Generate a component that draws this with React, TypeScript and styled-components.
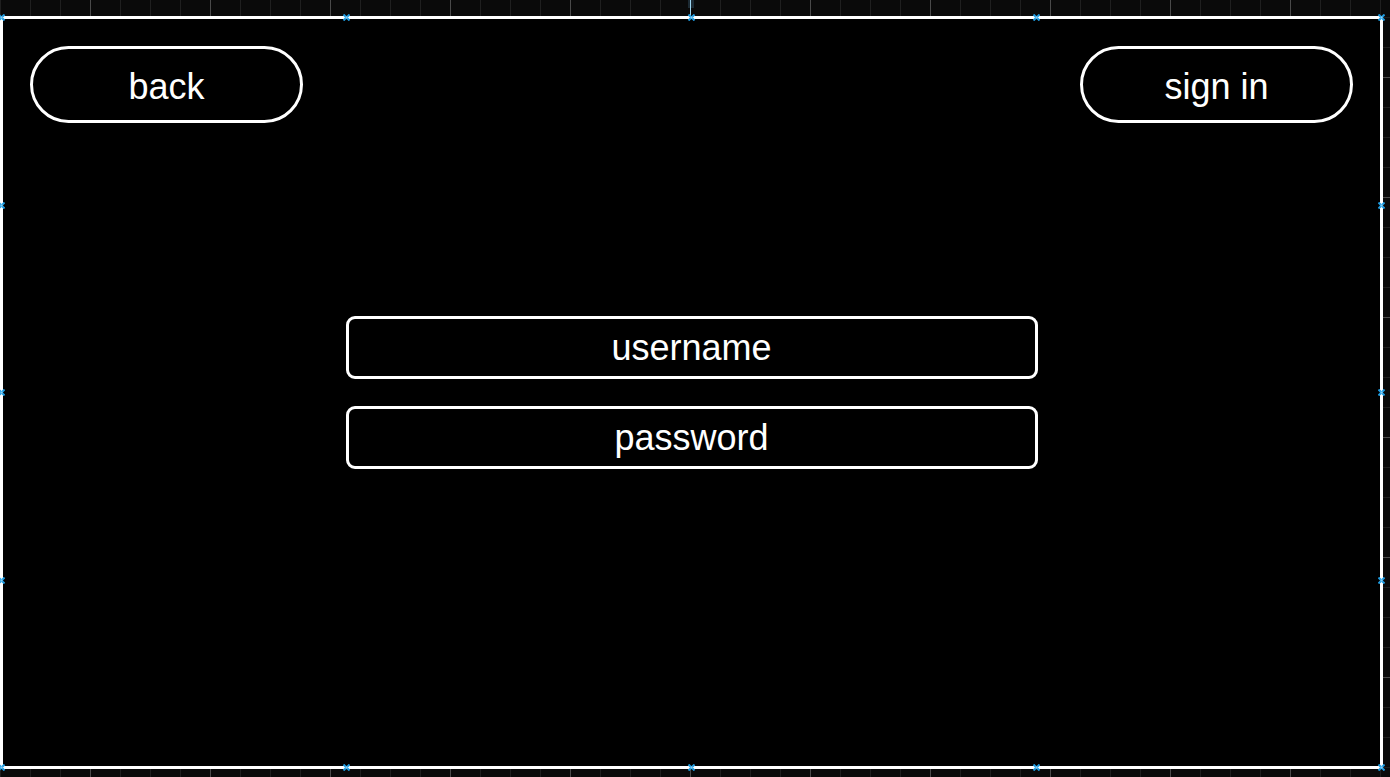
import React from "react";
import styled, { createGlobalStyle } from "styled-components";

const Global = createGlobalStyle`
  html, body {
    margin: 0;
    padding: 0;
    background: #0a0a0a;
  }
  body {
    font-family: "Liberation Sans", Arial, sans-serif;
  }
`;

const Canvas = styled.div`
  width: 1390px;
  height: 777px;
  box-sizing: border-box;
  padding-top: 16px;
  overflow: hidden;
  background-color: #0a0a0a;
  background-image:
    linear-gradient(to right, #4a4a4a 1px, transparent 1px),
    linear-gradient(to bottom, #4a4a4a 1px, transparent 1px),
    linear-gradient(to right, #1f1f1f 1px, transparent 1px),
    linear-gradient(to bottom, #1f1f1f 1px, transparent 1px);
  background-size: 120px 100%, 100% 120px, 30px 100%, 100% 30px;
  background-position: 90px 0, 0 77px, 0 0, 0 17px;
  position: relative;
`;

const Frame = styled.div`
  position: relative;
  width: 1383px;
  height: 753px;
  box-sizing: border-box;
  border: 3px solid #ffffff;
  background: #000000;
  padding: 27px;
  display: flex;
  flex-direction: column;
`;

const Header = styled.div`
  display: flex;
  justify-content: space-between;
  align-items: center;
`;

const PillButton = styled.button`
  width: 273px;
  height: 77px;
  box-sizing: border-box;
  border: 3px solid #ffffff;
  border-radius: 40px;
  background: #000000;
  color: #ffffff;
  font-family: "Liberation Sans", Arial, sans-serif;
  font-size: 36px;
  line-height: 1;
  padding: 4px 0 0;
  display: flex;
  align-items: center;
  justify-content: center;
  cursor: pointer;
`;

const Form = styled.div`
  margin-top: 193px;
  align-self: center;
  display: flex;
  flex-direction: column;
  gap: 27px;
`;

const Field = styled.div`
  width: 692px;
  height: 63px;
  box-sizing: border-box;
  border: 3px solid #ffffff;
  border-radius: 9px;
  color: #ffffff;
  font-size: 36px;
  line-height: 1;
  display: flex;
  align-items: center;
  justify-content: center;
`;

const Handle = styled.div<{ $x: number; $y: number }>`
  position: absolute;
  left: ${(p) => p.$x - 3}px;
  top: ${(p) => p.$y - 3}px;
  width: 7px;
  height: 7px;
  pointer-events: none;
  line-height: 0;
  svg {
    display: block;
  }
`;

const TopTick = styled.div`
  position: absolute;
  left: 688px;
  top: 0;
  width: 6px;
  height: 8px;
  background: #1c2a33;
  &::after {
    content: "";
    position: absolute;
    left: 2px;
    top: 0;
    width: 1px;
    height: 17px;
    background: #9fd6f0;
  }
`;

const HandleMark = ({ x, y }: { x: number; y: number }) => (
  <Handle $x={x} $y={y}>
    <svg width="7" height="7" viewBox="0 0 7 7">
      <path d="M0.5 0.5 L6.5 6.5 M6.5 0.5 L0.5 6.5" stroke="#1e9be0" strokeWidth="2" />
      <rect x="2.5" y="2.5" width="2" height="2" fill="#8fd3f5" />
    </svg>
  </Handle>
);

const handles: Array<[number, number]> = [
  [1, 17], [346, 17], [691, 17], [1036, 17], [1381, 17],
  [1, 205], [1, 392], [1, 580],
  [1381, 205], [1381, 392], [1381, 580],
  [1, 767], [346, 767], [691, 767], [1036, 767], [1381, 767],
];

export default function App() {
  return (
    <>
      <Global />
      <Canvas>
        <Frame>
          <Header>
            <PillButton>back</PillButton>
            <PillButton>sign in</PillButton>
          </Header>
          <Form>
            <Field>username</Field>
            <Field>password</Field>
          </Form>
        </Frame>
        <TopTick />
        {handles.map(([x, y]) => (
          <HandleMark key={`${x}-${y}`} x={x} y={y} />
        ))}
      </Canvas>
    </>
  );
}
